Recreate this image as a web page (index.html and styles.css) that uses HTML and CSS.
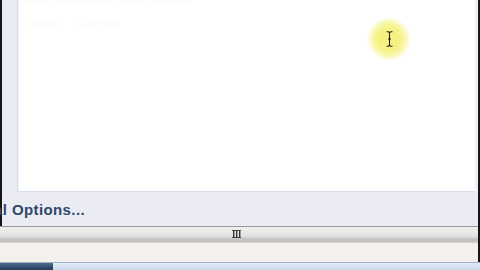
FILE: index.html
```html
<!DOCTYPE html>
<html>
<head>
<meta charset="utf-8">
<link rel="stylesheet" href="styles.css">
</head>
<body>
<div class="screen">
  <div class="main">
    <div class="window">
      <div class="edge-left"></div>
      <div class="frame">
        <div class="content-row">
          <div class="sidebar"></div>
          <div class="doc">
            <div class="ghost-top">Enter a description of the scenario</div>
            <div class="ghost-lines">
              <span class="ghost-a">Name</span>
              <span class="ghost-b">Comment</span>
            </div>
            <div class="highlight">
              <svg class="ibeam" width="7" height="16" viewBox="0 0 7 16">
                <path d="M0.5 0.8 H2.5 L3.5 1.8 L4.5 0.8 H6.5 M3.5 1.8 V14.2 M0.5 15.2 H2.5 L3.5 14.2 L4.5 15.2 H6.5 M2 8 H5" fill="none" stroke="#222" stroke-width="1.1"/>
              </svg>
            </div>
          </div>
          <div class="gutter"></div>
        </div>
        <div class="options-row">
          <span class="options-link">al Options...</span>
        </div>
      </div>
    </div>
    <div class="hscroll">
      <svg class="grip" width="9" height="8" viewBox="0 0 9 8">
        <path d="M0 0.5 H9 M0 7.5 H9" stroke="#555" stroke-width="1"/>
        <rect x="1" y="0" width="1.4" height="8" fill="#333"/>
        <rect x="4" y="0" width="1.4" height="8" fill="#333"/>
        <rect x="7" y="0" width="1.4" height="8" fill="#333"/>
      </svg>
    </div>
    <div class="status"></div>
  </div>
  <div class="edge-right"></div>
</div>
<div class="taskbar">
  <div class="start"></div>
  <div class="tasks"></div>
</div>
</body>
</html>
```
FILE: styles.css
```css
html, body {
  margin: 0;
  padding: 0;
  width: 480px;
  height: 270px;
  overflow: hidden;
  background: #f3f0ee;
  font-family: "Liberation Sans", Arial, sans-serif;
}

.screen {
  display: flex;
  height: 262px;
}

.main {
  flex: 1;
  display: flex;
  flex-direction: column;
}

.window {
  display: flex;
  height: 226px;
}

.edge-left {
  width: 2px;
  background: #161616;
}

.frame {
  flex: 1;
  display: flex;
  flex-direction: column;
  background: #ebebf3;
}

.content-row {
  display: flex;
  height: 192px;
}

.sidebar {
  width: 15px;
  background: #e7ebf3;
  border-right: 1px solid #d6dce6;
}

.doc {
  flex: 1;
  position: relative;
  background: #ffffff;
  border-left: 1px solid #eef2f7;
  border-bottom: 1px solid #d5e0ec;
  overflow: hidden;
}

.gutter {
  width: 3px;
  background: #eef0f5;
}

.ghost-top {
  margin-top: -7px;
  padding-left: 4px;
  font-size: 11px;
  line-height: 11px;
  color: #faf9ee;
}

.ghost-lines {
  display: flex;
  gap: 18px;
  padding: 14px 0 0 12px;
  font-size: 10px;
  color: #fbfbfb;
}

.highlight {
  position: absolute;
  left: 348px;
  top: 17px;
  width: 44px;
  height: 44px;
  border-radius: 50%;
  background: radial-gradient(circle closest-side, #f4f17a 0%, #f5f284 50%, #f8f6a8 72%, #fcfbd6 88%, rgba(255, 255, 255, 0) 100%);
  display: flex;
  align-items: center;
  justify-content: center;
}

.ibeam {
  display: block;
  margin-left: 1px;
}

.options-row {
  height: 34px;
  display: flex;
  align-items: center;
}

.options-link {
  margin-left: -8px;
  margin-top: 1px;
  font-size: 15px;
  font-weight: bold;
  letter-spacing: 0.4px;
  color: #30496b;
  white-space: nowrap;
}

.hscroll {
  height: 16px;
  border-top: 1px solid #9a9a9a;
  background: linear-gradient(#efefef 0%, #e8e8e8 40%, #dcdcdc 62%, #c3c3c3 75%, #c6c6c6 92%, #d6d6d6 100%);
  display: flex;
  justify-content: center;
  padding-right: 6px;
}

.grip {
  margin-top: 3px;
}

.status {
  flex: 1;
  background: #f3f0ee;
}

.edge-right {
  width: 2px;
  background: #161616;
}

.taskbar {
  display: flex;
  height: 8px;
  border-top: 1px solid #9fb1c6;
}

.start {
  width: 53px;
  background: linear-gradient(#4a6a8e, #1f3450);
}

.tasks {
  flex: 1;
  background: linear-gradient(#e4edf7, #c3d5ea);
}
```
